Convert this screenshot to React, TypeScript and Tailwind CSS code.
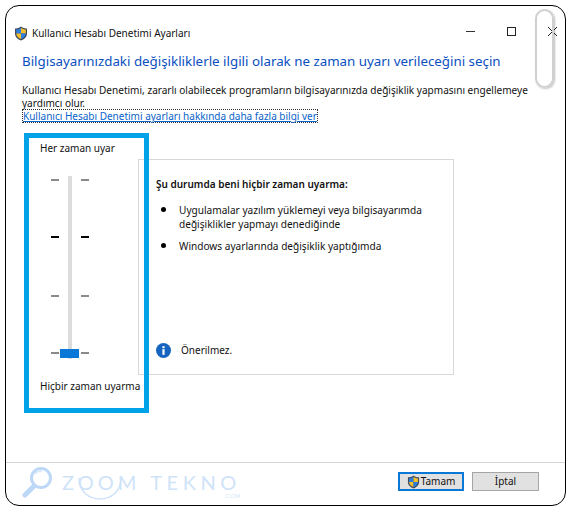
const font = { fontFamily: '"Noto Sans", "Open Sans", sans-serif' };

function Shield({ size = 14 }: { size?: number }) {
  return (
    <svg width={size} height={size + 1} viewBox="0 0 14 15" className="shrink-0">
      <path d="M7 .5 C5 2 3 2.5 1 2.5 V7.5 C1 11 4 13.4 7 14.5 C10 13.4 13 11 13 7.5 V2.5 C11 2.5 9 2 7 .5Z" fill="#3f4a5a" />
      <path d="M7 1.8 V7.5 H2.2 V3.6 C4 3.5 5.6 3 7 1.8Z" fill="#2f7fe0" />
      <path d="M7 1.8 C8.4 3 10 3.5 11.8 3.6 V7.5 H7Z" fill="#f5c02e" />
      <path d="M2.2 7.5 H7 V13.1 C4.6 12.1 2.4 10.2 2.2 7.5Z" fill="#f5c02e" />
      <path d="M7 7.5 H11.8 C11.6 10.2 9.4 12.1 7 13.1Z" fill="#2f7fe0" />
    </svg>
  );
}

function Tick({ dark, className = "" }: { dark?: boolean; className?: string }) {
  return (
    <div className={`flex h-[2px] w-[38px] justify-between ${className}`}>
      <span className={`h-full w-[8px] ${dark ? "bg-black" : "bg-[#8a8a8a]"}`} />
      <span className={`h-full w-[8px] ${dark ? "bg-black" : "bg-[#8a8a8a]"}`} />
    </div>
  );
}

function Watermark() {
  return (
    <div className="relative flex items-start gap-[8px] pt-[3px]">
      <svg width="32" height="36" viewBox="0 0 32 36" fill="none" className="shrink-0">
        <circle cx="19" cy="12" r="9.5" stroke="#bcd8f6" strokeWidth="3" />
        <path d="M13 8 A7 7 0 0 1 20 5.5" stroke="#d5e6f8" strokeWidth="1.5" />
        <path d="M12 20 L3 29" stroke="#bcd8f6" strokeWidth="5" strokeLinecap="round" />
      </svg>
      <div className="relative mt-[4px] flex h-[24px] items-center gap-[10px]" style={{ fontFamily: '"Lato", sans-serif' }}>
        <span className="text-[20px] leading-none font-normal tracking-[4px] text-[#cfe3f8]">ZOOM</span>
        <span className="text-[20px] leading-none font-normal tracking-[4.5px] text-[#cfe3f8]">TEKNO</span>
        <span
          className="absolute right-[0px] bottom-[-5px] text-[6px] leading-none tracking-[0.5px] text-[#d5e6f8]"
          style={{ fontFamily: '"Liberation Sans", sans-serif' }}
        >
          .COM
        </span>
        <svg width="48" height="24" viewBox="0 0 48 24" fill="none" className="absolute top-[6px] left-[14px]">
          <path d="M3 2 C3 30 45 30 45 2" stroke="#cfe3f8" strokeWidth="1.5" />
        </svg>
      </div>
    </div>
  );
}

export default function App() {
  return (
    <div className="h-[512px] w-[571px] overflow-hidden bg-white pt-[5px] pr-[5px] pb-[6px] pl-[5px]" style={font}>
      <div className="relative flex h-full flex-col rounded-[14px] border border-black bg-white">
        {/* title bar */}
        <div className="flex h-[35px] shrink-0 items-end pl-[8px]">
          <Shield />
          <span className="ml-[4px] text-[10px] leading-[15px] text-[#111]">Kullanıcı Hesabı Denetimi Ayarları</span>
        </div>

        <div className="flex flex-1 flex-col pl-[16px]">
          <h1 className="mt-[10px] text-[13.33px] leading-[20px] font-normal whitespace-nowrap text-[#0a4fbf]">
            Bilgisayarınızdaki değişikliklerle ilgili olarak ne zaman uyarı verileceğini seçin
          </h1>
          <p className="mt-[13px] w-[530px] text-[10.05px] leading-[13px] text-[#111]">
            Kullanıcı Hesabı Denetimi, zararlı olabilecek programların bilgisayarınızda değişiklik yapmasını engellemeye yardımcı olur.
          </p>
          <div className="-mt-[1px] w-fit border border-dotted border-[#333] text-[10px] leading-[12px] whitespace-nowrap text-[#0a63c9] underline">
            Kullanıcı Hesabı Denetimi ayarları hakkında daha fazla bilgi ver
          </div>

          <div className="mt-[12px] flex items-start">
            {/* slider */}
            <div className="flex w-[116px] shrink-0 flex-col items-start pt-[6px]">
              <span className="ml-[18px] text-[10px] leading-[15px] text-[#111]">Her zaman uyar</span>
              <div className="relative mt-[16px] ml-[29px] flex h-[190px] w-[38px] flex-col pt-[7px]">
                <Tick />
                <Tick dark className="mt-[55px]" />
                <Tick className="mt-[57px]" />
                <Tick className="mt-[55px]" />
                <div className="absolute top-[4px] left-[17px] h-[183px] w-[4px] bg-[#dcdcdc]" />
                <div className="absolute top-[177px] left-[9px] h-[9px] w-[19px] bg-[#0a78d7]" />
              </div>
              <span className="mt-[17px] ml-[18px] text-[10px] leading-[15px] whitespace-nowrap text-[#111]">Hiçbir zaman uyarma</span>
            </div>

            {/* panel */}
            <div className="mt-[24px] flex h-[216px] w-[316px] flex-col border border-[#d8d8d8] pt-[17px] pl-[17px]">
              <h2 className="text-[10px] leading-[15px] font-semibold text-[#111]">Şu durumda beni hiçbir zaman uyarma:</h2>
              <ul className="mt-[11px] flex flex-col gap-[8px] text-[10.1px] leading-[14px] text-[#111]">
                <li className="flex">
                  <span className="mt-[4px] ml-[5px] h-[5px] w-[5px] shrink-0 rounded-full bg-black" />
                  <span className="ml-[13px] w-[260px]">Uygulamalar yazılım yüklemeyi veya bilgisayarımda değişiklikler yapmayı denediğinde</span>
                </li>
                <li className="flex">
                  <span className="mt-[4px] ml-[5px] h-[5px] w-[5px] shrink-0 rounded-full bg-black" />
                  <span className="ml-[13px] whitespace-nowrap">Windows ayarlarında değişiklik yaptığımda</span>
                </li>
              </ul>
              <div className="mt-auto mb-[16px] flex items-center gap-[10px]">
                <svg width="15" height="15" viewBox="0 0 15 15" className="shrink-0">
                  <circle cx="7.5" cy="7.5" r="7.5" fill="#1565c0" />
                  <rect x="6.4" y="6.2" width="2.2" height="5.6" fill="#fff" />
                  <rect x="6.4" y="3.2" width="2.2" height="2" fill="#fff" />
                </svg>
                <span className="text-[10px] leading-[15px] text-[#111]">Önerilmez.</span>
              </div>
            </div>
          </div>
        </div>

        {/* footer */}
        <div className="flex h-[43px] shrink-0 items-start justify-between border-t border-[#d4d4d4] pr-[26px] pl-[16px]">
          <Watermark />
          <div className="mt-[9px] flex gap-[8px]">
            <div className="flex h-[19px] w-[66px] items-center justify-center border-2 border-[#0a78d7] bg-[#e1e1e1] text-[10px] text-[#111]">
              <Shield size={13} />
              <span className="ml-[1px]">Tamam</span>
            </div>
            <div className="flex h-[19px] w-[67px] items-center justify-center border border-[#a5a5a5] bg-[#e1e1e1] text-[10px] text-[#111]">
              İptal
            </div>
          </div>
        </div>

        {/* window controls, over the title bar */}
        <div className="absolute top-[21px] right-[8px] flex items-center gap-[32px]">
          <span className="h-px w-[9px] bg-[#333]" />
          <span className="h-[9px] w-[9px] border border-[#222]" />
          <svg width="9" height="9" viewBox="0 0 9 9" stroke="#222" strokeWidth="1">
            <path d="M0 0 L9 9 M9 0 L0 9" />
          </svg>
        </div>

        {/* capsule lying over the window corner */}
        <div className="absolute top-[3px] right-[11px] h-[79px] w-[19px] rounded-full border-2 border-[#d0d0d0] shadow-[1px_1px_2px_rgba(0,0,0,0.25)]" />

        {/* highlight frame around the slider */}
        <div className="absolute top-[127px] left-[18px] h-[280px] w-[125px] border-[5px] border-[#00a2e8]" />
      </div>
    </div>
  );
}
